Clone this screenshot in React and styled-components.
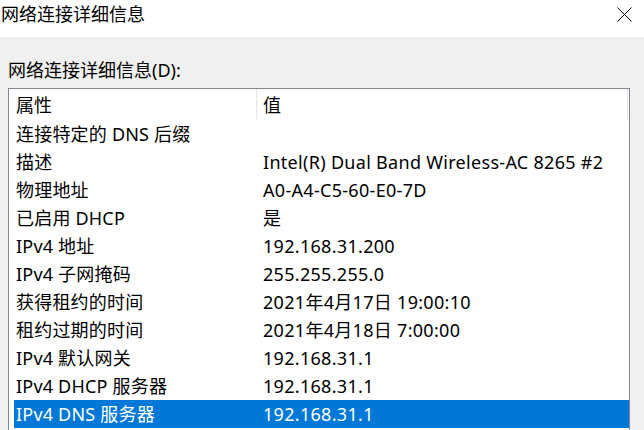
import React from "react";
import styled, { createGlobalStyle } from "styled-components";

const GlobalStyle = createGlobalStyle`
  html, body {
    margin: 0;
    padding: 0;
    width: 644px;
    height: 430px;
    overflow: hidden;
    background: #f0f0f0;
  }
  body {
    font-family: "Noto Sans", "Noto Sans CJK SC", sans-serif;
    font-size: 18px;
    color: #000;
  }
`;

const Window = styled.div`
  display: flex;
  flex-direction: column;
  width: 644px;
  height: 430px;
  overflow: hidden;
`;

const TitleBar = styled.div`
  display: flex;
  align-items: flex-start;
  justify-content: space-between;
  height: 37px;
  background: #fff;
  flex-shrink: 0;
`;

const Title = styled.div`
  padding-left: 1px;
  line-height: 29px;
  white-space: nowrap;
`;

const CloseButton = styled.div`
  display: flex;
  width: 15px;
  height: 15px;
  margin-top: 7px;
  margin-right: 12px;
`;

const Body = styled.div`
  display: flex;
  flex-direction: column;
  flex: 1;
  padding: 0 14px 0 8px;
  min-height: 0;
`;

const Label = styled.div`
  height: 51px;
  line-height: 67px;
  white-space: nowrap;
  flex-shrink: 0;
`;

const ListBox = styled.div`
  flex: 1;
  border: 1px solid #828790;
  border-bottom: none;
  background: #fff;
  overflow: hidden;
`;

const Grid = styled.div`
  display: grid;
  grid-template-columns: 248px 1fr;
`;

const HeaderRow = styled(Grid)`
  height: 31px;
  padding-right: 1px;
`;

const HeaderCell = styled.div`
  display: flex;
  align-items: center;
  padding-left: ${(p) => p.$pad}px;
  height: 30px;
  border-right: 1px solid #e5e5e5;
  white-space: nowrap;
`;

const Row = styled(Grid)`
  height: 28px;
  align-items: center;
  color: ${(p) => (p.$selected ? "#fff" : "#000")};
  background: ${(p) =>
    p.$selected
      ? "linear-gradient(to right, transparent 5px, #0078d7 5px)"
      : "none"};
`;

const Cell = styled.div`
  padding-left: ${(p) => p.$pad}px;
  letter-spacing: ${(p) => p.$spacing}px;
  white-space: nowrap;
  line-height: 28px;
`;

const rows = [
  ["连接特定的 DNS 后缀", ""],
  ["描述", "Intel(R) Dual Band Wireless-AC 8265 #2"],
  ["物理地址", "A0-A4-C5-60-E0-7D"],
  ["已启用 DHCP", "是"],
  ["IPv4 地址", "192.168.31.200"],
  ["IPv4 子网掩码", "255.255.255.0"],
  ["获得租约的时间", "2021年4月17日 19:00:10"],
  ["租约过期的时间", "2021年4月18日 7:00:00"],
  ["IPv4 默认网关", "192.168.31.1"],
  ["IPv4 DHCP 服务器", "192.168.31.1"],
  ["IPv4 DNS 服务器", "192.168.31.1"],
];

export default function App() {
  return (
    <Window>
      <GlobalStyle />
      <TitleBar>
        <Title>网络连接详细信息</Title>
        <CloseButton>
          <svg width="15" height="15" viewBox="0 0 15 15">
            <path d="M0.5 0.5 L14.5 14.5 M14.5 0.5 L0.5 14.5" stroke="#000" strokeWidth="1" fill="none" />
          </svg>
        </CloseButton>
      </TitleBar>
      <Body>
        <Label>网络连接详细信息(D):</Label>
        <ListBox>
          <HeaderRow>
            <HeaderCell $pad={7}>属性</HeaderCell>
            <HeaderCell $pad={6}>值</HeaderCell>
          </HeaderRow>
          {rows.map(([k, v], i) => (
            <Row key={i} $selected={i === rows.length - 1}>
              <Cell $pad={7} $spacing={0.2}>{k}</Cell>
              <Cell $pad={6} $spacing={0.3}>{v}</Cell>
            </Row>
          ))}
        </ListBox>
      </Body>
    </Window>
  );
}
